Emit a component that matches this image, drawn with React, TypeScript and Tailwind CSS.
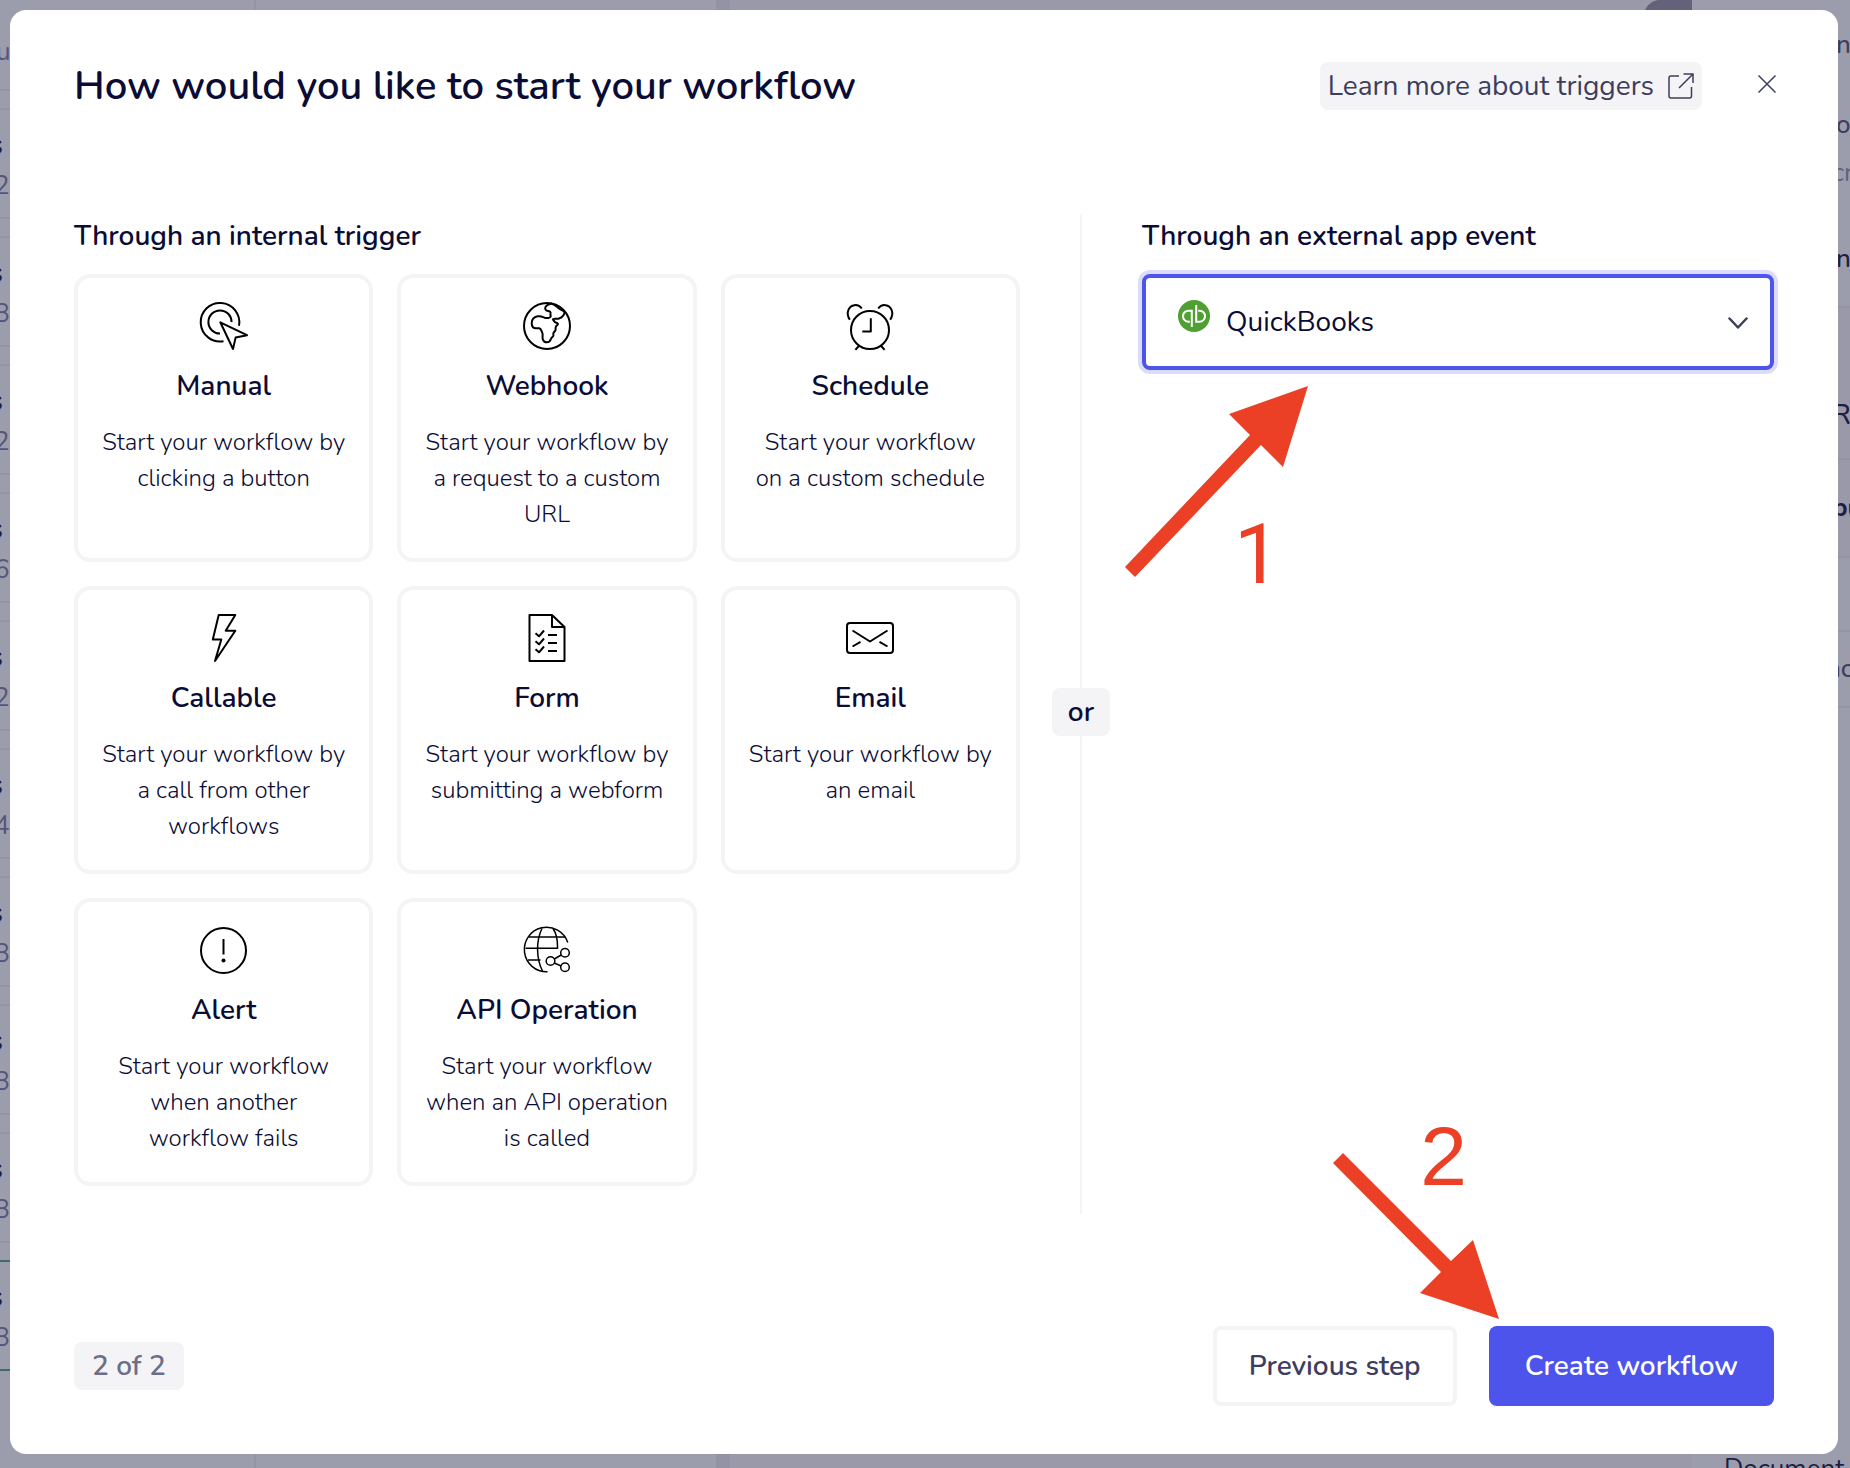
import type { ReactNode } from "react";

type Trigger = { title: string; text: string; icon: ReactNode };

const triggers: Trigger[] = [
  {
    title: "Manual",
    text: "Start your workflow by\nclicking a button",
    icon: (
      <>
        <path d="M39 23.7A19.3 19.3 0 1 0 23.5 39.2" />
        <path d="M31.6 20A11.6 11.6 0 1 0 20 31.6" />
        <path d="M20.3 20.3 47 33.2 35.6 35.6 33 47Z" />
      </>
    ),
  },
  {
    title: "Webhook",
    text: "Start your workflow by\na request to a custom\nURL",
    icon: (
      <>
        <circle cx="24" cy="24" r="23" />
        <path d="M29 1.5C26 2 23.5 3 22.5 5c-1 2 .5 4 2.5 4s3 1.500 2.500 3c-.3 1 .3 1.500.2 2.500-.4 1.500-4 1.800-6 1.200-2-.8-4-2-7-1.400-4 .8-6 3.500-6 7 0 3 1.500 5 4.300 5h3.300c1.700.3 2 2.500 3 4.500 1 2.200-.3 4.500.5 6.500.8 2.300 2.200 3 4 3s3.500-1 4.200-3.500c.3-1.500 1.800-1.500 2.300-3 .3-1.300-.3-1.800.3-3 .8-1.500 2-1.500 2-3.300 0-1.500-.3-2.500.7-3.500 1.200-1 2.200-1.500 1.500-2.500-.8-1-2.800-.4-3.300-1.800-.5-1.200-1.500-1.500-1.500-2.500 1.800-1.300 3.500.2 6-.7 3-1 5.500-3 5.500-6.700C40 8.500 38 7.800 36 6.500c-2.500-1.700-3.500-4-7-4.500" />
      </>
    ),
  },
  {
    title: "Schedule",
    text: "Start your workflow\non a custom schedule",
    icon: (
      <>
        <circle cx="24" cy="28" r="19" />
        <path d="M24.800 16.300v13.200h-8.500" />
        <path d="M3.800 17.700C-.5 11 2.500 4 8.500 3.200c3-.4 5.500.8 7.300 3.300M44.200 17.700C48.500 11 45.500 4 39.500 3.200c-3-.4-5.500.8-7.300 3.300" />
        <path d="m12.800 44-3.400 3.800M35.200 44l3.400 3.800" />
      </>
    ),
  },
  {
    title: "Callable",
    text: "Start your workflow by\na call from other\nworkflows",
    icon: <path d="M18.700 1h16.600l-9.600 15.700h9.600L15 47l6.300-21.500h-8.500Z" />,
  },
  {
    title: "Form",
    text: "Start your workflow by\nsubmitting a webform",
    icon: (
      <>
        <path d="M6.500 1H29l12.500 12v34h-35Z" />
        <path d="M29 1v12h12.500" />
        <path d="m12.500 19.300 3.500 3 5-5.800M12.500 27.300l3.500 3 5-5.800M12.500 35.300l3.500 3 5-5.800" />
        <path d="M25 21h9M25 29h9M25 37h9" />
      </>
    ),
  },
  {
    title: "Email",
    text: "Start your workflow by\nan email",
    icon: (
      <>
        <rect x="1" y="9" width="46" height="30" rx="3" />
        <path d="m6.500 16.500 17.500 11 17.500-11M14.500 27.800l-8 4.700M33.500 27.800l8 4.700" />
      </>
    ),
  },
  {
    title: "Alert",
    text: "Start your workflow\nwhen another\nworkflow fails",
    icon: (
      <>
        <circle cx="23.500" cy="24.500" r="22.500" />
        <path d="M23.500 13V28.500" />
        <circle cx="23.500" cy="34.500" r="2" fill="currentColor" stroke="none" />
      </>
    ),
  },
  {
    title: "API Operation",
    text: "Start your workflow\nwhen an API operation\nis called",
    icon: (
      <g strokeWidth="1.500">
        <path d="M44.800 16.500A22.300 22.300 0 1 0 24.500 45.800" />
        <path d="M6 11H42.500M2.500 22.300h32V20c0-7-1.500-13-4.500-17.500M5 34H17.500" />
        <path d="M19 2.500c-6 12-6 30 .5 42.500" />
        <circle cx="27.500" cy="35" r="4.300" />
        <circle cx="42" cy="26.700" r="4.300" />
        <circle cx="42" cy="41.300" r="4.300" />
        <path d="m31.300 33 6.900-4M31.300 37l6.900 3" />
      </g>
    ),
  },
];

const runs = ["2", "8", "2", "6", "2", "4", "8", "8", "8", "8"];

function Backdrop() {
  return (
    <div aria-hidden="true" className="absolute inset-0 flex overflow-hidden bg-[#9c9dac]">
      <div className="flex w-[256px] shrink-0 flex-col gap-[17px] border-r-2 border-[#9394a5]">
        <div className="flex h-[91px] shrink-0 items-center border-b-2 border-[#9394a5] pt-[13px] text-[26px] text-[#55567a]">
          <span className="-ml-1">u</span>
        </div>
        {runs.map((run, i) => (
          <div
            key={i}
            className={`flex h-[111px] shrink-0 flex-col border-y-2 pt-[14px] ${
              i === 9 ? "border-[#3f6b68]" : "border-[#9394a5]"
            }`}
          >
            <span className="-ml-[11px] text-[28px] leading-[42px] font-bold text-[#1d1d45]">s</span>
            <span className="-ml-[6px] text-[26px] leading-[40px] text-[#55567a]">{run}</span>
          </div>
        ))}
      </div>
      <div className="w-[460px] shrink-0" />
      <div className="w-[14px] shrink-0 bg-[#9393a5]" />
      <div className="flex flex-1 justify-end bg-[#9999a9]">
        <div className="h-12 w-12 rounded-tl-2xl bg-[#62627b]" />
      </div>
      <div className="flex w-[158px] shrink-0 flex-col text-[26px] leading-[30px] whitespace-nowrap text-[#3d3e5e]">
        <div className="flex h-[306px] shrink-0 flex-col pl-[144px] font-medium">
          <span className="mt-[30px]">n</span>
          <span className="mt-[50px]">o</span>
          <span className="mt-[18px] -ml-1 font-normal text-[#62627f]">cr</span>
          <span className="mt-[56px] text-[#1d1d45]">n</span>
        </div>
        <div className="flex h-[152px] shrink-0 items-end border-t-2 border-[#9394a5] bg-[#9999a9] pb-[28px] pl-[140px] text-[28px] font-medium text-[#1d1d45]">
          R
        </div>
        <div className="flex h-[100px] shrink-0 items-center border-y-2 border-[#9394a5] bg-[#9999a9] pl-[140px] font-bold text-[#1d1d45]">
          bu
        </div>
        <div className="h-[72px] shrink-0" />
        <div className="flex h-[78px] shrink-0 items-center border-y-2 border-[#9394a5] pl-[134px] font-medium">
          nc
        </div>
        <div className="mt-auto h-[14px] shrink-0 pl-[32px] text-[#1d1d45]">Document</div>
      </div>
    </div>
  );
}

function TriggerCard({ title, text, icon }: Trigger) {
  return (
    <button
      type="button"
      className="flex h-[288px] flex-col items-center rounded-2xl border-4 border-[#f4f4f7] pt-6 text-center"
    >
      <svg
        viewBox="0 0 48 48"
        className="size-12 overflow-visible text-black"
        fill="none"
        stroke="currentColor"
        strokeWidth="2"
        strokeLinejoin="round"
        aria-hidden="true"
      >
        {icon}
      </svg>
      <span className="mt-[18px] text-[28px] leading-[36px] font-semibold">{title}</span>
      <span className="mt-5 text-2xl leading-[36px] font-light whitespace-pre-line">{text}</span>
    </button>
  );
}

function QuickBooksLogo() {
  return (
    <svg viewBox="0 0 32 32" className="pointer-events-none absolute top-[26px] left-[36px] size-8" aria-hidden="true">
      <circle cx="16" cy="16" r="16" fill="#4f9f33" />
      <g fill="none" stroke="#fff" strokeWidth="2">
        <path d="M13.800 27V10.700h-3.300a5.500 5.500 0 0 0 0 11h1.300" />
        <path d="M18.200 5v16.700h3.300a5.500 5.500 0 0 0 0-11h-1.300" />
      </g>
    </svg>
  );
}

export default function App() {
  return (
    <div className="relative flex min-h-screen pt-[10px] pr-3 pb-[14px] pl-[10px] font-['Nunito','Lato',sans-serif] text-[#0b0c35]">
      <Backdrop />
      <div
        role="dialog"
        aria-labelledby="dialog-title"
        className="relative flex flex-1 flex-col rounded-2xl bg-white px-16 pt-[52px] pb-12"
      >
        <header className="flex h-12 items-center">
          <h1 id="dialog-title" className="text-[40px] leading-[48px] font-semibold">
            How would you like to start your workflow
          </h1>
          <a
            href="#triggers"
            className="ml-auto flex h-12 items-center gap-[14px] rounded-lg bg-[#f4f4f7] px-2 text-[28px] text-[#3d3e5e]"
          >
            Learn more about triggers
            <svg viewBox="0 0 26 26" className="size-[26px]" fill="none" stroke="currentColor" strokeWidth="1.500" aria-hidden="true">
              <path d="M11 3H3a2 2 0 0 0-2 2v18a2 2 0 0 0 2 2h18.500a2 2 0 0 0 2-2v-9" />
              <path d="M11 15 25 1M15.500 1H25v9" />
            </svg>
          </a>
          <button type="button" aria-label="Close" className="-mr-[2px] ml-14 pb-1 text-[#3d3e5e]">
            <svg viewBox="0 0 18 18" className="size-[18px]" fill="none" stroke="currentColor" strokeWidth="1.500" aria-hidden="true">
              <path d="m.5.5 17 17M17.500.5l-17 17" />
            </svg>
          </button>
        </header>

        <main className="mt-[104px] grid min-h-[1000px] flex-1 grid-cols-[946fr_122px_632fr]">
          <section aria-labelledby="internal">
            <h2 id="internal" className="text-[28px] leading-[44px] font-semibold">
              Through an internal trigger
            </h2>
            <div className="mt-4 grid grid-cols-3 gap-6">
              {triggers.map((t) => (
                <TriggerCard key={t.title} {...t} />
              ))}
            </div>
          </section>

          <div className="flex flex-col items-center">
            <div className="w-[2px] flex-1 bg-[#f4f4f7]" />
            <div className="-mt-1 flex h-12 items-center rounded-lg bg-[#f4f4f7] px-4 text-[28px] font-semibold">or</div>
            <div className="w-[2px] flex-1 bg-[#f4f4f7]" />
          </div>

          <section className="relative">
            <h2 className="text-[28px] leading-[44px] font-semibold">
              <label htmlFor="app">Through an external app event</label>
            </h2>
            <div className="relative mt-4">
              <select
                id="app"
                className="block h-24 w-full appearance-none rounded-lg border-4 border-[#4c54eb] bg-white pr-16 pl-[80px] text-[28px] ring-4 ring-[#dbdcfb]"
              >
                <option>QuickBooks</option>
              </select>
              <QuickBooksLogo />
              <svg
                viewBox="0 0 20 12"
                className="pointer-events-none absolute top-[43px] right-[26px] h-3 w-5 text-[#3d3e5e]"
                fill="none"
                stroke="currentColor"
                strokeWidth="2.500"
                strokeLinecap="round"
                strokeLinejoin="round"
                aria-hidden="true"
              >
                <path d="m1.500 1.500 8.500 9 8.500-9" />
              </svg>
            </div>
            <svg
              viewBox="0 0 184 192"
              className="pointer-events-none absolute top-[171px] -left-[18px] h-[192px] w-[184px]"
              fill="#eb4026"
              aria-hidden="true"
            >
              <path d="M184 1 105 29l21 21L1 182l10 10L137 60l22 22Z" />
            </svg>
            <span className="absolute top-[299px] left-[92px] font-['Roboto',sans-serif] text-[83px] leading-[83px] text-[#eb4026]">
              1
            </span>
          </section>
        </main>

        <footer className="relative mt-[112px] flex h-20 items-center gap-8">
          <p className="mr-auto flex h-12 items-center rounded-lg bg-[#f4f4f7] px-[18px] text-[28px] font-semibold text-[#6d6e87]">
            2 of 2
          </p>
          <button
            type="button"
            className="h-20 rounded-lg border-4 border-[#f4f4f7] px-8 text-[28px] font-semibold text-[#3d3e5e]"
          >
            Previous step
          </button>
          <button type="button" className="h-20 rounded-lg bg-[#4c54eb] px-9 text-[28px] font-semibold text-white">
            Create workflow
          </button>
          <svg
            viewBox="0 0 168 168"
            className="pointer-events-none absolute right-[274px] bottom-[86px] size-[168px]"
            fill="#eb4026"
            aria-hidden="true"
          >
            <path d="M11 1 1 11l108 109-21 21 79 26-26-79-22 21Z" />
          </svg>
          <span className="absolute right-[307px] bottom-[208px] font-['Liberation_Sans',sans-serif] text-[84px] leading-[84px] text-[#eb4026]">
            2
          </span>
        </footer>
      </div>
    </div>
  );
}
